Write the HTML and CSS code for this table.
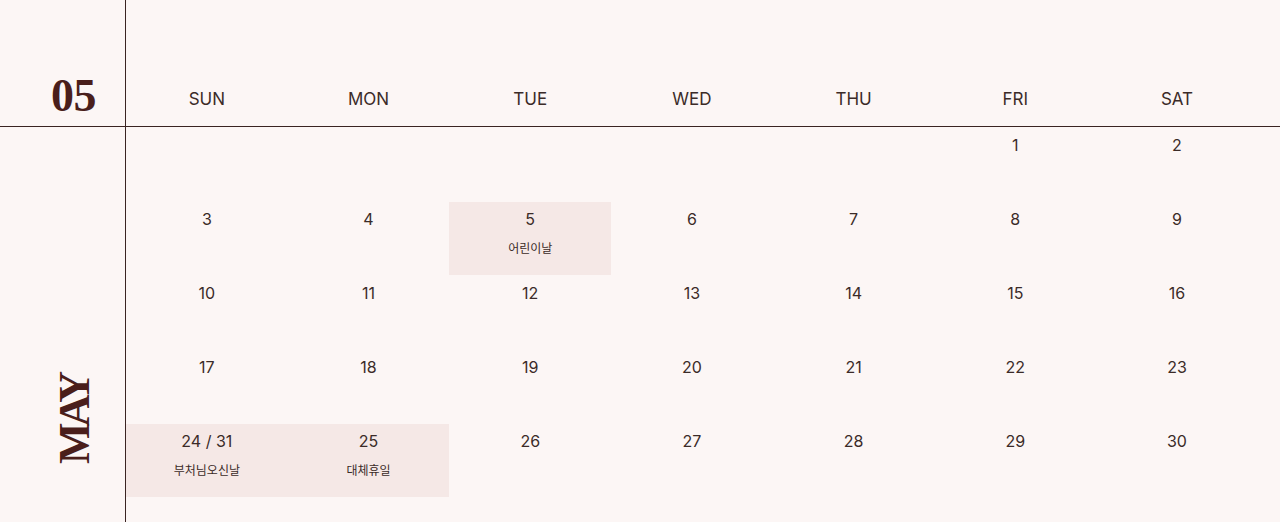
FILE: index.html
```html
<!DOCTYPE html>
<html lang="ko">
<head>
<meta charset="utf-8">
<title>May Calendar</title>
<link rel="stylesheet" href="styles.css">
</head>
<body>
<div class="calendar">
  <div class="head">
    <div class="side side-top"><span class="month-num">05</span></div>
    <div class="weekdays">
      <div class="wd">SUN</div>
      <div class="wd">MON</div>
      <div class="wd">TUE</div>
      <div class="wd">WED</div>
      <div class="wd">THU</div>
      <div class="wd">FRI</div>
      <div class="wd">SAT</div>
    </div>
  </div>
  <div class="body">
    <div class="side side-bottom"><span class="month-name">MAY</span></div>
    <div class="days">
      <div class="day"></div>
      <div class="day"></div>
      <div class="day"></div>
      <div class="day"></div>
      <div class="day"></div>
      <div class="day"><span class="num">1</span></div>
      <div class="day"><span class="num">2</span></div>

      <div class="day"><span class="num">3</span></div>
      <div class="day"><span class="num">4</span></div>
      <div class="day holiday"><span class="num">5</span><span class="label">어린이날</span></div>
      <div class="day"><span class="num">6</span></div>
      <div class="day"><span class="num">7</span></div>
      <div class="day"><span class="num">8</span></div>
      <div class="day"><span class="num">9</span></div>

      <div class="day"><span class="num">10</span></div>
      <div class="day"><span class="num">11</span></div>
      <div class="day"><span class="num">12</span></div>
      <div class="day"><span class="num">13</span></div>
      <div class="day"><span class="num">14</span></div>
      <div class="day"><span class="num">15</span></div>
      <div class="day"><span class="num">16</span></div>

      <div class="day"><span class="num">17</span></div>
      <div class="day"><span class="num">18</span></div>
      <div class="day"><span class="num">19</span></div>
      <div class="day"><span class="num">20</span></div>
      <div class="day"><span class="num">21</span></div>
      <div class="day"><span class="num">22</span></div>
      <div class="day"><span class="num">23</span></div>

      <div class="day holiday"><span class="num">24 / 31</span><span class="label">부처님오신날</span></div>
      <div class="day holiday"><span class="num">25</span><span class="label">대체휴일</span></div>
      <div class="day"><span class="num">26</span></div>
      <div class="day"><span class="num">27</span></div>
      <div class="day"><span class="num">28</span></div>
      <div class="day"><span class="num">29</span></div>
      <div class="day"><span class="num">30</span></div>
    </div>
  </div>
</div>
</body>
</html>
```

FILE: styles.css
```css
html, body {
  margin: 0;
  padding: 0;
}

body {
  background: #fcf6f5;
  color: #3b2b28;
  font-family: Inter, "Noto Sans", "Noto Sans CJK KR", sans-serif;
  width: 1280px;
  height: 522px;
  overflow: hidden;
}

.calendar {
  display: flex;
  flex-direction: column;
  height: 522px;
}

.head {
  display: flex;
  height: 127px;
  box-sizing: border-box;
  border-bottom: 1px solid #3a2422;
}

.body {
  display: flex;
  flex: 1;
}

.side {
  width: 126px;
  flex: none;
  box-sizing: border-box;
  border-right: 1px solid #3a2422;
  display: flex;
}

.side-top {
  justify-content: flex-end;
  align-items: flex-end;
  padding-right: 29px;
  padding-bottom: 7px;
}

.month-num {
  font-family: "Liberation Serif", "DejaVu Serif", serif;
  font-weight: 700;
  font-size: 46px;
  line-height: 46px;
  color: #4a1e1b;
  letter-spacing: -0.5px;
}

.side-bottom {
  flex-direction: column;
  justify-content: flex-end;
  padding-left: 53px;
  padding-bottom: 58px;
}

.month-name {
  font-family: "Liberation Serif", "DejaVu Serif", serif;
  font-weight: 700;
  font-size: 44px;
  line-height: 44px;
  color: #4a1e1b;
  letter-spacing: -4px;
  writing-mode: vertical-rl;
  transform: rotate(180deg);
  width: 44px;
}

.weekdays {
  display: grid;
  grid-template-columns: repeat(7, 161.7px);
  align-items: end;
  padding-bottom: 17px;
}

.wd {
  text-align: center;
  font-size: 17px;
  line-height: 20px;
  color: #3b2b28;
}

.days {
  display: grid;
  grid-template-columns: repeat(7, 161.7px);
  grid-template-rows: repeat(5, 74px);
  align-content: start;
}

.day {
  display: flex;
  flex-direction: column;
  align-items: center;
  padding-top: 8px;
  box-sizing: border-box;
}

.holiday {
  background: #f5e8e6;
  margin-top: 1px;
  padding-top: 7px;
}

.num {
  font-size: 16px;
  line-height: 20px;
  color: #3b2b28;
}

.label {
  margin-top: 11px;
  font-family: "Noto Sans CJK KR", "Noto Sans", sans-serif;
  font-size: 12px;
  line-height: 16px;
  color: #3b2b28;
}
```
